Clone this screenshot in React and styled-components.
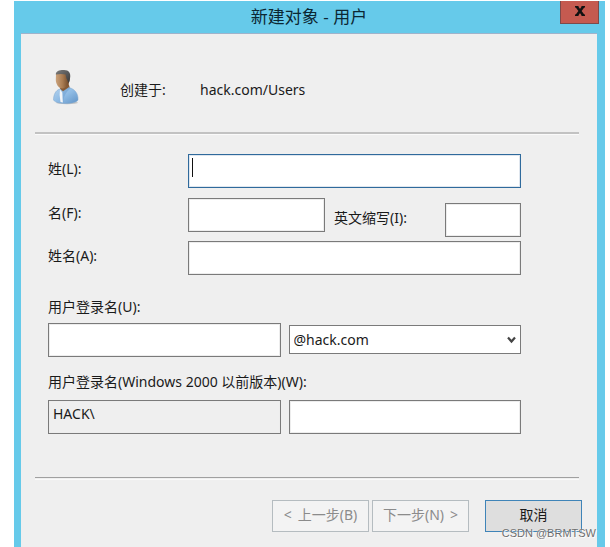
import React from "react";
import styled, { createGlobalStyle } from "styled-components";

const GlobalStyle = createGlobalStyle`
  *, *::before, *::after { box-sizing: border-box; }
  body { margin: 0; background: #fff; }
  body, input, select, button {
    font-family: "Noto Sans", "Noto Sans CJK SC", sans-serif;
    font-size: 14px;
    line-height: 20px;
    color: #1a1a1a;
  }
  #root { min-height: 100vh; display: flex; }
`;

const Dialog = styled.main`
  flex: 1;
  display: flex;
  flex-direction: column;
  margin: 1px 5px 0 14px;
  padding: 0 8px 0 7px;
  background: #66caea;
`;

const TitleBar = styled.header`
  display: grid;
  grid-template-columns: 1fr auto;
  height: 32px;
`;

const Title = styled.h1`
  grid-area: 1 / 1 / 2 / 3;
  margin: 0;
  font-size: 17px;
  font-weight: 400;
  line-height: 31px;
  text-align: center;
  color: #0c2733;
`;

const CloseButton = styled.button`
  grid-area: 1 / 2;
  display: flex;
  align-items: center;
  justify-content: center;
  width: 39px;
  height: 23px;
  margin-right: -2px;
  padding: 0 0 2px;
  border: 1px solid #7d4a4a;
  border-top: 0;
  background: #c55a50;
`;

const Body = styled.div`
  flex: 1;
  border-top: 1px solid #9fb3cb;
  background: #efefef;
`;

const Location = styled.section`
  display: flex;
  align-items: center;
  height: 98px;
  padding: 14px 32px 0 31px;
  svg { margin-bottom: 6px; }
`;

const LocationLabel = styled.span`
  width: 80px;
  margin-left: 40px;
`;

const Divider = styled.hr`
  height: 2px;
  margin: 0 18px 0 14px;
  border: 0;
  border-top: ${(p) => (p.$dark ? "1px solid #a0a0a0" : "2px solid #c2c2c2")};
  box-shadow: 0 1px #fafafa;
`;

const Form = styled.form`
  padding: 20px 76px 43px 27px;
`;

const Row = styled.div`
  display: grid;
  grid-template-columns: 140px 1fr;
  align-items: start;
  margin-bottom: ${(p) => p.$gap}px;
`;

const Label = styled.label`
  display: block;
  padding-top: 5px;
  white-space: nowrap;
`;

const NameParts = styled.div`
  display: grid;
  grid-template-columns: 1fr 187px;
  column-gap: 9px;
`;

const InitialsPair = styled.div`
  display: grid;
  grid-template-columns: 1fr 76px;
  padding-top: 5px;
`;

const TextBox = styled.input`
  display: block;
  width: 100%;
  min-width: 0;
  height: 34px;
  padding: 0 4px 8px;
  border: 1px solid ${(p) => (p.$active ? "#2f6a9c" : "#7a7a7a")};
  border-radius: 0;
  outline: 0;
  background: #fff;
  box-shadow: inset 0 0 0 1px ${(p) => (p.$active ? "#dfe6ee" : "#ededed")};
  &:read-only { background: #efefef; }
`;

const CaretField = styled.div`
  position: relative;
`;

const Caret = styled.span`
  position: absolute;
  left: 4px;
  top: 4px;
  width: 1px;
  height: 19px;
  background: #111;
`;

const BlockLabel = styled.label`
  display: block;
  margin-bottom: ${(p) => p.$gap}px;
`;

const LoginRow = styled.div`
  display: grid;
  grid-template-columns: 1fr 1fr;
  column-gap: 8px;
  margin-bottom: ${(p) => p.$gap}px;
`;

const SelectBox = styled.div`
  display: grid;
  align-items: center;
  align-self: start;
  margin-top: 2px;
  svg {
    grid-area: 1 / 1;
    justify-self: end;
    margin-right: 5px;
    pointer-events: none;
  }
`;

const Select = styled.select`
  grid-area: 1 / 1;
  width: 100%;
  height: 29px;
  padding: 0 20px 0 4px;
  border: 1px solid #7a7a7a;
  border-radius: 0;
  background: #fff;
  appearance: none;
`;

const Footer = styled.footer`
  display: flex;
  justify-content: flex-end;
  gap: 3px;
  padding: 21px 15px 16px;
`;

const ActionButton = styled.button`
  display: flex;
  align-items: center;
  justify-content: center;
  gap: 6px;
  width: 97px;
  height: 32px;
  padding: 0 0 2px;
  border: 1px solid #3f84b8;
  background: #dedede;
  white-space: nowrap;
  &:disabled {
    border-color: #b5bcc0;
    background: #f3f3f3;
    color: #8b8b8b;
  }
  &:last-child { margin-left: 13px; }
`;

const Watermark = styled.span`
  position: absolute;
  right: 14px;
  bottom: 6px;
  font: 11px/16px "Liberation Sans", sans-serif;
  color: #6c6c6c;
  text-shadow: 0 0 1px #fff, 1px 1px 1px #fff;
`;

function UserIcon() {
  return (
    <svg width="28" height="36" viewBox="0 0 28 36" aria-hidden="true">
      <defs>
        <linearGradient id="coat" x1="0" y1="0" x2="1" y2="1">
          <stop offset="0" stopColor="#b4d3ee" />
          <stop offset="0.5" stopColor="#8fbbe4" />
          <stop offset="1" stopColor="#6193c6" />
        </linearGradient>
        <linearGradient id="skin" x1="0" y1="0" x2="1" y2="0">
          <stop offset="0" stopColor="#cba27b" />
          <stop offset="0.5" stopColor="#a87b51" />
          <stop offset="1" stopColor="#684123" />
        </linearGradient>
        <linearGradient id="hair" x1="0" y1="0" x2="1" y2="1">
          <stop offset="0" stopColor="#7c7c7c" />
          <stop offset="1" stopColor="#3a3a3a" />
        </linearGradient>
      </defs>
      <ellipse cx="15" cy="33.8" rx="11" ry="1.5" fill="#999" opacity="0.5" />
      <path d="M9 15 L16 13 L18 19.5 L11 24 L8 20Z" fill="#865b37" />
      <path d="M8 20 C3.5 21 1.5 26 1.5 31 C3 33.5 8 34.5 14 34.5 C20 34.5 25 33 26 31 C26.5 25 23 20 17 18.5 L11 22.5Z" fill="url(#coat)" stroke="#7fa6cf" strokeWidth="0.5" />
      <path d="M8 20.5 L10.5 24 L11 33.5 L8.5 33 Q7 26 8 20.5Z" fill="#f3f5f8" />
      <path d="M10.5 23.5 L17 18.5 L18.5 19.5 C14 23 11.5 27 11.5 33.5 L10.8 33.5Z" fill="#78a6d6" opacity="0.7" />
      <path d="M4 5 C8 3.5 15 4 17 7 C19 12 16 18 11 19.5 C6.5 20 4 15 3.8 11Z" fill="url(#skin)" />
      <path d="M3.8 5.5 C3.5 2 8 .8 12 1 C17 1 19 4 18 9.5 C17.6 12 17 13.5 16.3 13.5 L15 10.5 C14 9 14 7 13.5 5.5 Q9 4.5 3.8 5.5Z" fill="url(#hair)" />
    </svg>
  );
}

export default function App() {
  return (
    <>
      <GlobalStyle />
      <Dialog>
        <TitleBar>
          <Title>新建对象 - 用户</Title>
          <CloseButton type="button" aria-label="关闭">
            <svg width="12" height="10" viewBox="0 0 12 10">
              <path d="M2.6 .5l6.8 9M9.4 .5l-6.8 9" stroke="#111" strokeWidth="2.6" fill="none" />
              <path d="M1 .8h3.4M7.6 .8h3.4M1 9.2h3.4M7.6 9.2h3.4" stroke="#111" strokeWidth="1.6" fill="none" />
            </svg>
          </CloseButton>
        </TitleBar>
        <Body>
          <Location>
            <UserIcon />
            <LocationLabel>创建于:</LocationLabel>
            <span>hack.com/Users</span>
          </Location>
          <Divider />
          <Form id="new-user">
            <Row $gap={10}>
              <Label htmlFor="last">姓(L):</Label>
              <CaretField>
                <TextBox id="last" $active />
                <Caret />
              </CaretField>
            </Row>
            <Row $gap={4}>
              <Label htmlFor="first">名(F):</Label>
              <NameParts>
                <TextBox id="first" />
                <InitialsPair>
                  <Label htmlFor="initials">英文缩写(I):</Label>
                  <TextBox id="initials" />
                </InitialsPair>
              </NameParts>
            </Row>
            <Row $gap={22}>
              <Label htmlFor="full">姓名(A):</Label>
              <TextBox id="full" />
            </Row>
            <BlockLabel htmlFor="login" $gap={6}>用户登录名(U):</BlockLabel>
            <LoginRow $gap={15}>
              <TextBox id="login" />
              <SelectBox>
                <Select aria-label="域" defaultValue="@hack.com">
                  <option>@hack.com</option>
                </Select>
                <svg width="9" height="8" viewBox="0 0 9 8">
                  <path d="M1 1.5 L4.5 5.5 L8 1.5" stroke="#444" strokeWidth="2.2" fill="none" />
                </svg>
              </SelectBox>
            </LoginRow>
            <BlockLabel htmlFor="legacy" $gap={8}>用户登录名(Windows 2000 以前版本)(W):</BlockLabel>
            <LoginRow $gap={0}>
              <TextBox aria-label="域前缀" readOnly value="HACK\" />
              <TextBox id="legacy" />
            </LoginRow>
          </Form>
          <Divider $dark />
          <Footer>
            <ActionButton type="button" disabled>
              <span>&lt;</span> <span>上一步(B)</span>
            </ActionButton>
            <ActionButton type="button" disabled>
              <span>下一步(N)</span> <span>&gt;</span>
            </ActionButton>
            <ActionButton type="button">取消</ActionButton>
          </Footer>
        </Body>
      </Dialog>
      <Watermark>CSDN @BRMTSW</Watermark>
    </>
  );
}
